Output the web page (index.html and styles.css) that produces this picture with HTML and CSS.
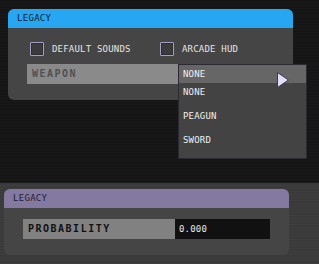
FILE: index.html
```html
<!DOCTYPE html>
<html lang="en">

<head>
    <meta charset="UTF-8">
    <meta name="viewport" content="width=device-width, initial-scale=1.0">
    <title>Legacy settings</title>
    <link rel="stylesheet" href="styles.css">
</head>

<body>
    <div class="stage stage-top">
        <section class="panel">
            <header class="panel-head head-blue">LEGACY</header>
            <div class="panel-body body-top">
                <div class="checks">
                    <label class="check"><span class="box"></span>DEFAULT SOUNDS</label>
                    <label class="check"><span class="box"></span>ARCADE HUD</label>
                </div>
                <div class="field">
                    <span class="field-label label-light">WEAPON</span>
                </div>
            </div>
        </section>

        <!-- open select list -->
        <div class="dropdown">
            <div class="dropdown-current">NONE</div>
            <ul class="dropdown-list">
                <li>NONE</li>
                <li>PEAGUN</li>
                <li>SWORD</li>
            </ul>
        </div>

        <svg class="cursor" width="14" height="18" viewBox="0 0 14 18">
            <polygon points="1.5,1.5 1.5,16.5 12.5,9" fill="#e2def6" stroke="#3b3650" stroke-width="1" stroke-linejoin="round" />
        </svg>
    </div>

    <div class="stage stage-bottom">
        <section class="panel">
            <header class="panel-head head-purple">LEGACY</header>
            <div class="panel-body body-bottom">
                <div class="field">
                    <span class="field-label label-dark">PROBABILITY</span>
                    <span class="field-value">0.000</span>
                </div>
            </div>
        </section>
    </div>
</body>

</html>
```

FILE: styles.css
```css
* {
    margin: 0;
    padding: 0;
    box-sizing: border-box;
}

body {
    font-family: "DejaVu Sans Mono", "Liberation Mono", monospace;
    font-size: 9px;
    background-color: #3a3a3a;
    width: 319px;
    height: 264px;
    overflow: hidden;
}

.stage-top {
    position: relative;
    height: 183px;
    padding: 9px 0 0 8px;
    background: repeating-linear-gradient(180deg, #151515 0, #151515 2px, #191919 2px, #191919 3px);
}

.stage-bottom {
    height: 81px;
    padding: 6px 0 0 4px;
    background: repeating-linear-gradient(180deg, #3a3a3a 0, #3a3a3a 2px, #3e3e3e 2px, #3e3e3e 3px);
}

.panel {
    width: 285px;
    border-radius: 6px;
    overflow: hidden;
    background-color: #454545;
}

.panel-head {
    height: 19px;
    line-height: 19px;
    padding-left: 9px;
    letter-spacing: 0.3px;
}

.head-blue {
    background-color: #27a7f2;
    color: #14222e;
}

.head-purple {
    background-color: #8379a1;
    color: #25212f;
}

.body-top {
    height: 72px;
    padding: 14px 0 0 19px;
}

.body-bottom {
    height: 47px;
    padding: 11px 0 0 19px;
}

.checks {
    display: flex;
    height: 14px;
    margin: 0 0 8px 3px;
}

.check {
    display: flex;
    align-items: center;
    gap: 8px;
    width: 130px;
    color: #e6e6e6;
    letter-spacing: 0.2px;
}

.box {
    width: 14px;
    height: 14px;
    border: 1px solid #a89fc4;
    border-radius: 1px;
    background-color: #3b3b3b;
    box-shadow: inset 0 0 0 1px #2e2d36;
}

.field {
    display: flex;
    width: 247px;
    height: 20px;
}

.field-label {
    flex: 0 0 152px;
    padding-left: 5px;
    line-height: 20px;
    font-size: 10px;
    font-weight: bold;
    letter-spacing: 1.5px;
}

.label-light {
    flex: 1;
    background-color: #8a8a8a;
    color: #505050;
}

.label-dark {
    background-color: #818181;
    color: #111111;
}

.field-value {
    flex: 1;
    padding-left: 4px;
    line-height: 20px;
    background-color: #111111;
    color: #e8e8e8;
    letter-spacing: 0.2px;
}

.dropdown {
    position: absolute;
    left: 178px;
    top: 64px;
    width: 129px;
    height: 95px;
    border: 1px solid #2b2a32;
    background-color: #434343;
    color: #f0f0f0;
    letter-spacing: 0.2px;
}

.dropdown-current {
    height: 18px;
    line-height: 18px;
    padding-left: 4px;
    background-color: #666666;
}

.dropdown-list {
    list-style: none;
}

.dropdown-list li {
    height: 24px;
    line-height: 18px;
    padding-left: 4px;
}

.cursor {
    position: absolute;
    left: 276px;
    top: 71px;
}
```
